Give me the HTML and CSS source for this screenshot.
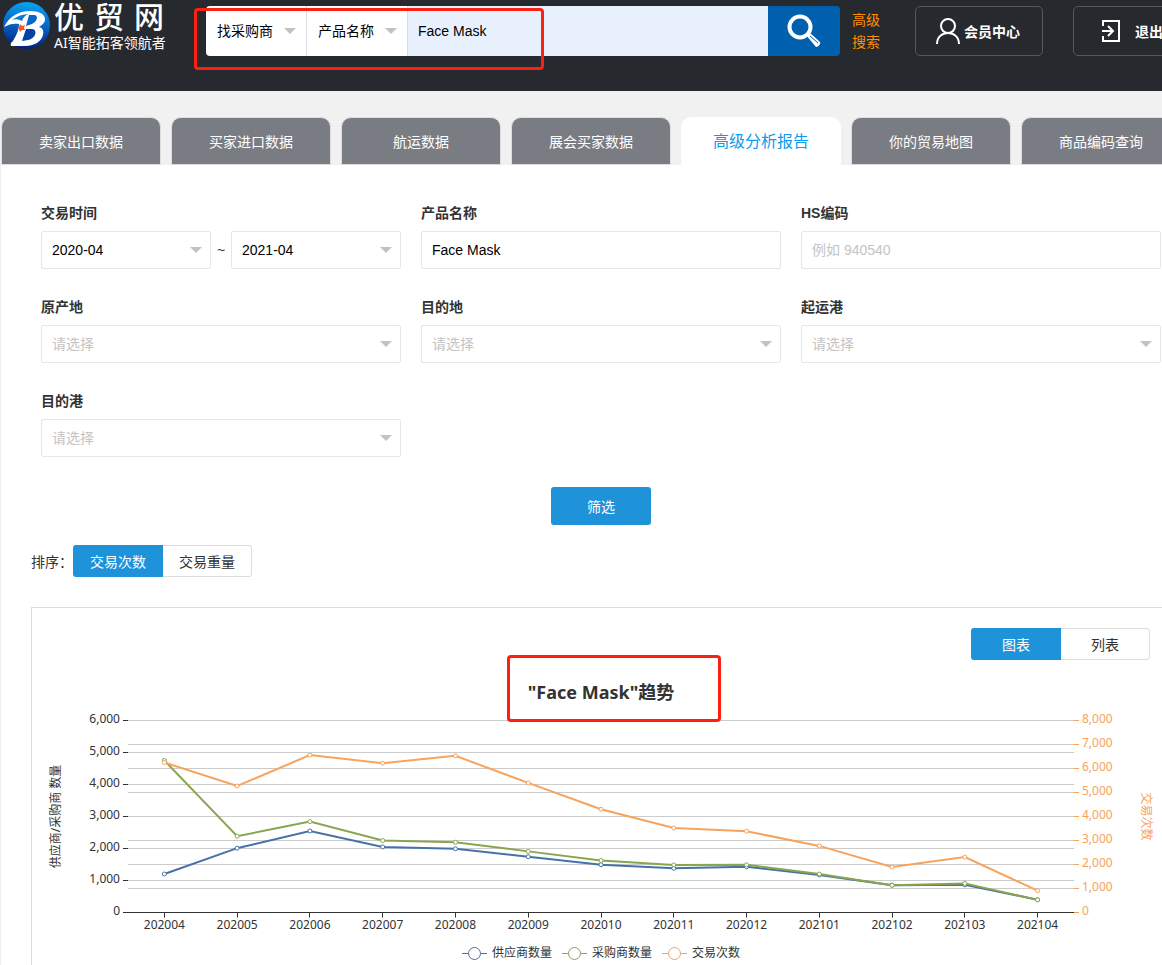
FILE: index.html
```html
<!DOCTYPE html>
<html lang="zh-CN">
<head>
  <meta charset="UTF-8">
  <meta name="viewport" content="width=device-width, initial-scale=1.0">
  <link rel="stylesheet" href="styles.css">
  <title>高级分析报告 - 优贸网</title>
</head>
<body>
  <header class="header">
    <a class="logo" href="#">
      <svg class="logo-mark" viewBox="0 0 48 48" aria-hidden="true">
        <defs>
          <linearGradient id="ball" x1="0.6" y1="0" x2="0.5" y2="1">
            <stop offset="0" stop-color="#08a4f2"/>
            <stop offset="0.5" stop-color="#0563c4"/>
            <stop offset="1" stop-color="#00207f"/>
          </linearGradient>
        </defs>
        <circle cx="24.500" cy="23.500" r="23.500" fill="url(#ball)"/>
        <path d="M2 25C7 15 16 9 28 9c9 0 15 3 15 8 0 4-3 6-6 8 4 1 5 4 4 8-2 7-9 11-18 11H9c-1-2 0-4 2-5 3-5 6-11 6-17-5-1-10 0-15 3z" fill="#fff"/>
        <path d="M10 18C15 14 21 12 27 12c-4 1-6 4-7 7-4-2-7-2-10-1z" fill="#0a7ad6"/>
        <path d="M27 13h5c5 0 4 8-5 10l-3 1z" fill="#0667c5"/>
        <path d="M24 27h6c6 0 4 10-4 11l-6 1z" fill="#0443a2"/>
        <path d="M18 22l2 2 3-1-1 3 1 2-3 0-2 2-1-3-2-1 2-1z" fill="#f2562b"/>
      </svg>
      <span class="logo-text">
        <strong class="logo-name"><span>优</span><span>贸</span><span>网</span></strong>
        <span class="logo-slogan">AI智能拓客领航者</span>
      </span>
    </a>

    <form class="search" onsubmit="return false">
      <div class="search-select">
        <select aria-label="搜索类型"><option>找采购商</option><option>找供应商</option></select>
      </div>
      <div class="search-select">
        <select aria-label="搜索字段"><option>产品名称</option><option>公司名称</option></select>
      </div>
      <input class="search-input" type="text" aria-label="关键词" value="Face Mask">
      <button class="search-btn" type="submit" aria-label="搜索">
        <svg viewBox="0 0 34 34" width="34" height="34">
          <circle cx="13" cy="13" r="10.5" fill="none" stroke="#fff" stroke-width="4"/>
          <path d="M19 21l3-3 11 10c1 2-2 5-4 5z" fill="#fff"/>
          <path d="M23 22l8 7" stroke="#0060ae" stroke-width="1"/>
        </svg>
      </button>
      <span class="mark mark-search"></span>
    </form>

    <a class="advanced" href="#">高级<br>搜索</a>

    <a class="user-btn" href="#">
      <svg viewBox="0 0 24 26" width="24" height="26" fill="none" stroke="#fff" stroke-width="2">
        <circle cx="12" cy="8" r="7"/>
        <path d="M1 26c0-7 5-11 11-11s11 4 11 11"/>
      </svg>
      会员中心
    </a>
    <a class="user-btn logout" href="#">
      <svg viewBox="0 0 20 24" width="20" height="24" fill="none" stroke="#fff" stroke-width="2">
        <path d="M2 7V2h16v20H2v-5M1 12h10M7 7l5 5-5 5"/>
      </svg>
      退出
    </a>
  </header>

  <nav class="tabs">
    <a href="#">卖家出口数据</a>
    <a href="#">买家进口数据</a>
    <a href="#">航运数据</a>
    <a href="#">展会买家数据</a>
    <a class="active" href="#">高级分析报告</a>
    <a href="#">你的贸易地图</a>
    <a href="#">商品编码查询</a>
  </nav>

  <main class="panel">
    <form class="filter" onsubmit="return false">
      <div class="fields">
        <div class="field">
          <label for="dateFrom">交易时间</label>
          <div class="range">
            <div class="select"><select id="dateFrom"><option>2020-04</option></select></div>
            <span class="tilde">~</span>
            <div class="select"><select aria-label="结束时间"><option>2021-04</option></select></div>
          </div>
        </div>
        <div class="field">
          <label for="product">产品名称</label>
          <input id="product" type="text" value="Face Mask">
        </div>
        <div class="field">
          <label for="hsCode">HS编码</label>
          <input id="hsCode" type="text" placeholder="例如 940540">
        </div>
        <div class="field">
          <label for="origin">原产地</label>
          <div class="select empty"><select id="origin"><option>请选择</option></select></div>
        </div>
        <div class="field">
          <label for="destination">目的地</label>
          <div class="select empty"><select id="destination"><option>请选择</option></select></div>
        </div>
        <div class="field">
          <label for="portFrom">起运港</label>
          <div class="select empty"><select id="portFrom"><option>请选择</option></select></div>
        </div>
        <div class="field">
          <label for="portTo">目的港</label>
          <div class="select empty"><select id="portTo"><option>请选择</option></select></div>
        </div>
      </div>
      <button class="submit" type="submit">筛选</button>
    </form>

    <div class="sort">
      <span>排序：</span>
      <div class="toggle">
        <button class="on" type="button">交易次数</button>
        <button type="button">交易重量</button>
      </div>
    </div>

    <section class="card">
      <div class="card-tools">
        <div class="toggle">
          <button class="on" type="button">图表</button>
          <button type="button">列表</button>
        </div>
      </div>
      <h2 class="chart-title"><span class="chart-name">"Face Mask"趋势<span class="mark mark-title"></span></span></h2>
      <svg id="chart" class="chart" role="img" aria-label="Face Mask 趋势"></svg>
      <ul class="legend" id="legend"></ul>
    </section>
  </main>

  <script src="chart.js"></script>
</body>
</html>
```
FILE: styles.css
```css
* {
  box-sizing: border-box;
}

body {
  margin: 0;
  overflow-x: hidden;
  background-color: #f1f1f1;
  color: #333;
  font-family: "Liberation Sans", "Noto Sans CJK SC", sans-serif;
  font-size: 14px;
}

a {
  color: inherit;
  text-decoration: none;
}

input, select, button {
  font-family: inherit;
  font-size: 14px;
}

button {
  cursor: pointer;
}

/* header */
.header {
  display: flex;
  align-items: flex-start;
  min-width: 1201px;
  height: 91px;
  background-color: #26292e;
}

.logo {
  display: flex;
  flex: none;
  gap: 4px;
  width: 206px;
  padding: 2px 0 0 2px;
  color: #fff;
}

.logo-mark {
  width: 48px;
  height: 48px;
}

.logo-text {
  display: flex;
  flex-direction: column;
}

.logo-name {
  display: flex;
  gap: 10px;
  font-size: 30px;
  font-weight: 500;
  line-height: 32px;
}

.logo-slogan {
  font-family: "Noto Sans", "Noto Sans CJK SC", sans-serif;
  line-height: 18px;
}

.search {
  position: relative;
  display: flex;
  flex: 1;
  max-width: 634px;
  height: 50px;
  margin-top: 6px;
}

.search-select, .select {
  position: relative;
}

.search-select::after, .select::after {
  content: "";
  position: absolute;
  right: 8px;
  top: 50%;
  margin-top: -3px;
  border: 6px solid transparent;
  border-top-color: #c2c2c2;
  border-bottom: 0;
  pointer-events: none;
}

.search-select {
  width: 101px;
  background-color: #fff;
  border-right: 1px solid #ddd;
}

.search-select::after {
  right: 10px;
}

.search-select:first-child {
  border-radius: 4px 0 0 4px;
}

.search-select select, .select select {
  appearance: none;
  width: 100%;
  height: 100%;
  padding: 0 10px;
  border: 0;
  background: none;
  color: #000;
}

.search-select select {
  padding-left: 11px;
}

.search-input {
  flex: 1;
  min-width: 0;
  padding: 0 10px;
  border: 0;
  background-color: #e8f0fe;
}

.search-btn {
  display: flex;
  align-items: center;
  justify-content: center;
  width: 72px;
  padding: 0;
  border: 0;
  border-radius: 0 4px 4px 0;
  background-color: #0060ae;
}

.mark {
  position: absolute;
  border: 3px solid #fe1f13;
  border-radius: 4px;
  pointer-events: none;
}

.mark-search {
  left: -12px;
  top: 2px;
  width: 350px;
  height: 62px;
}

.advanced {
  width: 75px;
  padding: 9px 0 0 12px;
  color: #ff8f00;
  line-height: 22px;
}

.user-btn {
  display: flex;
  flex: none;
  align-items: center;
  gap: 4px;
  width: 128px;
  height: 50px;
  margin: 6px 30px 0 0;
  padding-left: 20px;
  border: 1px solid #54575b;
  border-radius: 5px;
  color: #fff;
  font-weight: bold;
}

.logout {
  gap: 14px;
  margin-right: 0;
  padding-left: 27px;
}

/* tabs */
.tabs {
  display: flex;
  gap: 10px;
  min-width: 1200px;
  padding: 26px 19px 0 1px;
}

.tabs a {
  flex: 1;
  height: 48px;
  border: 1px solid #ddd;
  border-radius: 10px 10px 0 0;
  background-color: #7a7c83;
  color: #fff;
  line-height: 48px;
  text-align: center;
}

.tabs .active {
  border-color: #fff;
  background-color: #fff;
  color: #0b9cee;
  font-size: 16px;
}

/* filter */
.panel {
  min-width: 1201px;
  padding: 30px 30px 0;
  border-left: 1px solid #eee;
  background-color: #fff;
}

.fields {
  display: grid;
  grid-template-columns: repeat(3, 1fr);
  gap: 20px;
  padding: 0 10px;
}

.field label {
  display: block;
  font-weight: bold;
  line-height: 36px;
}

.field input, .select {
  width: 100%;
  height: 38px;
  border: 1px solid #e6e6e6;
  border-radius: 2px;
  background-color: #fff;
}

.field input {
  padding: 0 10px;
  color: #000;
}

.field input::placeholder, .empty select {
  color: #c4c4c4;
}

.range {
  display: flex;
}

.tilde {
  flex: 0 0 20px;
  line-height: 38px;
  text-align: center;
}

.submit {
  display: block;
  width: 100px;
  height: 38px;
  margin: 30px auto 20px;
  border: 0;
  border-radius: 3px;
  background-color: #1e93d9;
  color: #fff;
}

.sort {
  display: flex;
  align-items: center;
}

.toggle {
  display: flex;
}

.toggle button {
  width: 89px;
  height: 32px;
  padding: 0;
  border: 1px solid #ddd;
  border-left: 0;
  border-radius: 0 3px 3px 0;
  background-color: #fff;
  color: #333;
}

.toggle .on {
  width: 90px;
  border: 0;
  border-radius: 3px 0 0 3px;
  background-color: #1e93d9;
  color: #fff;
}

/* chart */
.card {
  margin-top: 30px;
  border: 1px solid #ddd;
  border-bottom: 0;
  font-family: "Noto Sans", "Noto Sans CJK SC", sans-serif;
}

.card-tools {
  display: flex;
  justify-content: flex-end;
  padding: 20px 20px 0;
}

.chart-title {
  margin: 20px 0 0;
  font-size: 18px;
  line-height: 24px;
  text-align: center;
}

.chart-name {
  position: relative;
  display: inline-block;
}

.mark-title {
  left: -21px;
  right: -47px;
  top: -25px;
  bottom: -18px;
}

.chart {
  display: block;
  width: 100%;
  height: 237px;
}

.chart text {
  fill: #333;
  font-size: 12px;
}

.chart .right {
  fill: #f7a35c;
}

.grid {
  stroke: #ccc;
}

.axis {
  stroke: #333;
}

.axis-right {
  stroke: #f7a35c;
}

.line {
  fill: none;
  stroke-width: 2;
}

.dot {
  fill: #fff;
}

.legend {
  display: flex;
  justify-content: center;
  gap: 10px;
  margin: 0;
  padding: 0;
  list-style: none;
  font-size: 12px;
  line-height: 24px;
}

.legend li {
  display: flex;
  align-items: center;
  gap: 5px;
}
```
FILE: chart.js
```js
var months = ["202004", "202005", "202006", "202007", "202008", "202009", "202010", "202011", "202012", "202101", "202102", "202103", "202104"];

var series = [
  { name: "供应商数量", color: "#4572a7", max: 6000, data: [1203, 2010, 2547, 2050, 1990, 1744, 1494, 1380, 1430, 1175, 855, 865, 400] },
  { name: "采购商数量", color: "#89a54e", max: 6000, data: [4750, 2385, 2840, 2250, 2195, 1910, 1625, 1485, 1490, 1200, 850, 910, 395] },
  { name: "交易次数", color: "#f7a35c", max: 8000, data: [6250, 5270, 6560, 6220, 6530, 5400, 4300, 3520, 3385, 2775, 1895, 2310, 910] }
];

function line(cls, x1, y1, x2, y2) {
  return '<line class="' + cls + '" x1="' + x1 + '" y1="' + y1 + '" x2="' + x2 + '" y2="' + y2 + '"/>';
}

function drawChart() {
  var svg = document.getElementById("chart");
  var left = 96;
  var right = svg.clientWidth - 96;
  var top = 16.5;
  var height = 192;
  var bottom = top + height;
  var step = (right - left) / months.length;
  var html = "";
  var i, y, x;

  for (i = 0; i <= 8; i++) {
    y = bottom - height * i / 8;
    if (i > 0) html += line("grid", left, y, right, y);
    html += line("axis-right", right, y, right + 5, y);
    html += '<text class="right" x="' + (right + 8) + '" y="' + (y + 2) + '">' + (i * 1000).toLocaleString("en-US") + '</text>';
  }
  for (i = 0; i <= 6; i++) {
    y = bottom - height * i / 6;
    if (i > 0) html += line("grid", left, y, right, y);
    html += line("axis", left - 5, y, left, y);
    html += '<text text-anchor="end" x="' + (left - 8) + '" y="' + (y + 2) + '">' + (i * 1000).toLocaleString("en-US") + '</text>';
  }

  html += line("axis", left, bottom, right, bottom);
  months.forEach(function (month, n) {
    x = left + step * (n + 0.5);
    html += line("axis", Math.floor(x) + 0.5, bottom, Math.floor(x) + 0.5, bottom + 5);
    html += '<text text-anchor="middle" x="' + x + '" y="' + (bottom + 16) + '">' + month + '</text>';
  });

  var middle = top + height / 2;
  html += '<text text-anchor="middle" transform="translate(28 ' + middle + ') rotate(-90)">供应商/采购商 数量</text>';
  html += '<text class="right" text-anchor="middle" transform="translate(' + (right + 68) + ' ' + middle + ') rotate(90)">交易次数</text>';

  series.forEach(function (s) {
    var points = s.data.map(function (value, n) {
      return [left + step * (n + 0.5), bottom - height * value / s.max];
    });
    html += '<polyline class="line" stroke="' + s.color + '" points="' + points.join(" ") + '"/>';
    points.forEach(function (p) {
      html += '<circle class="dot" stroke="' + s.color + '" cx="' + p[0] + '" cy="' + p[1] + '" r="2"/>';
    });
  });
  svg.innerHTML = html;
}

function drawLegend() {
  document.getElementById("legend").innerHTML = series.map(function (s) {
    return '<li><svg width="25" height="14" fill="#fff" stroke="' + s.color + '">' +
           '<path d="M0 7.5h25"/><circle cx="12.5" cy="7.5" r="6"/></svg>' + s.name + '</li>';
  }).join("");
}

drawChart();
drawLegend();
window.addEventListener("resize", drawChart);
```
